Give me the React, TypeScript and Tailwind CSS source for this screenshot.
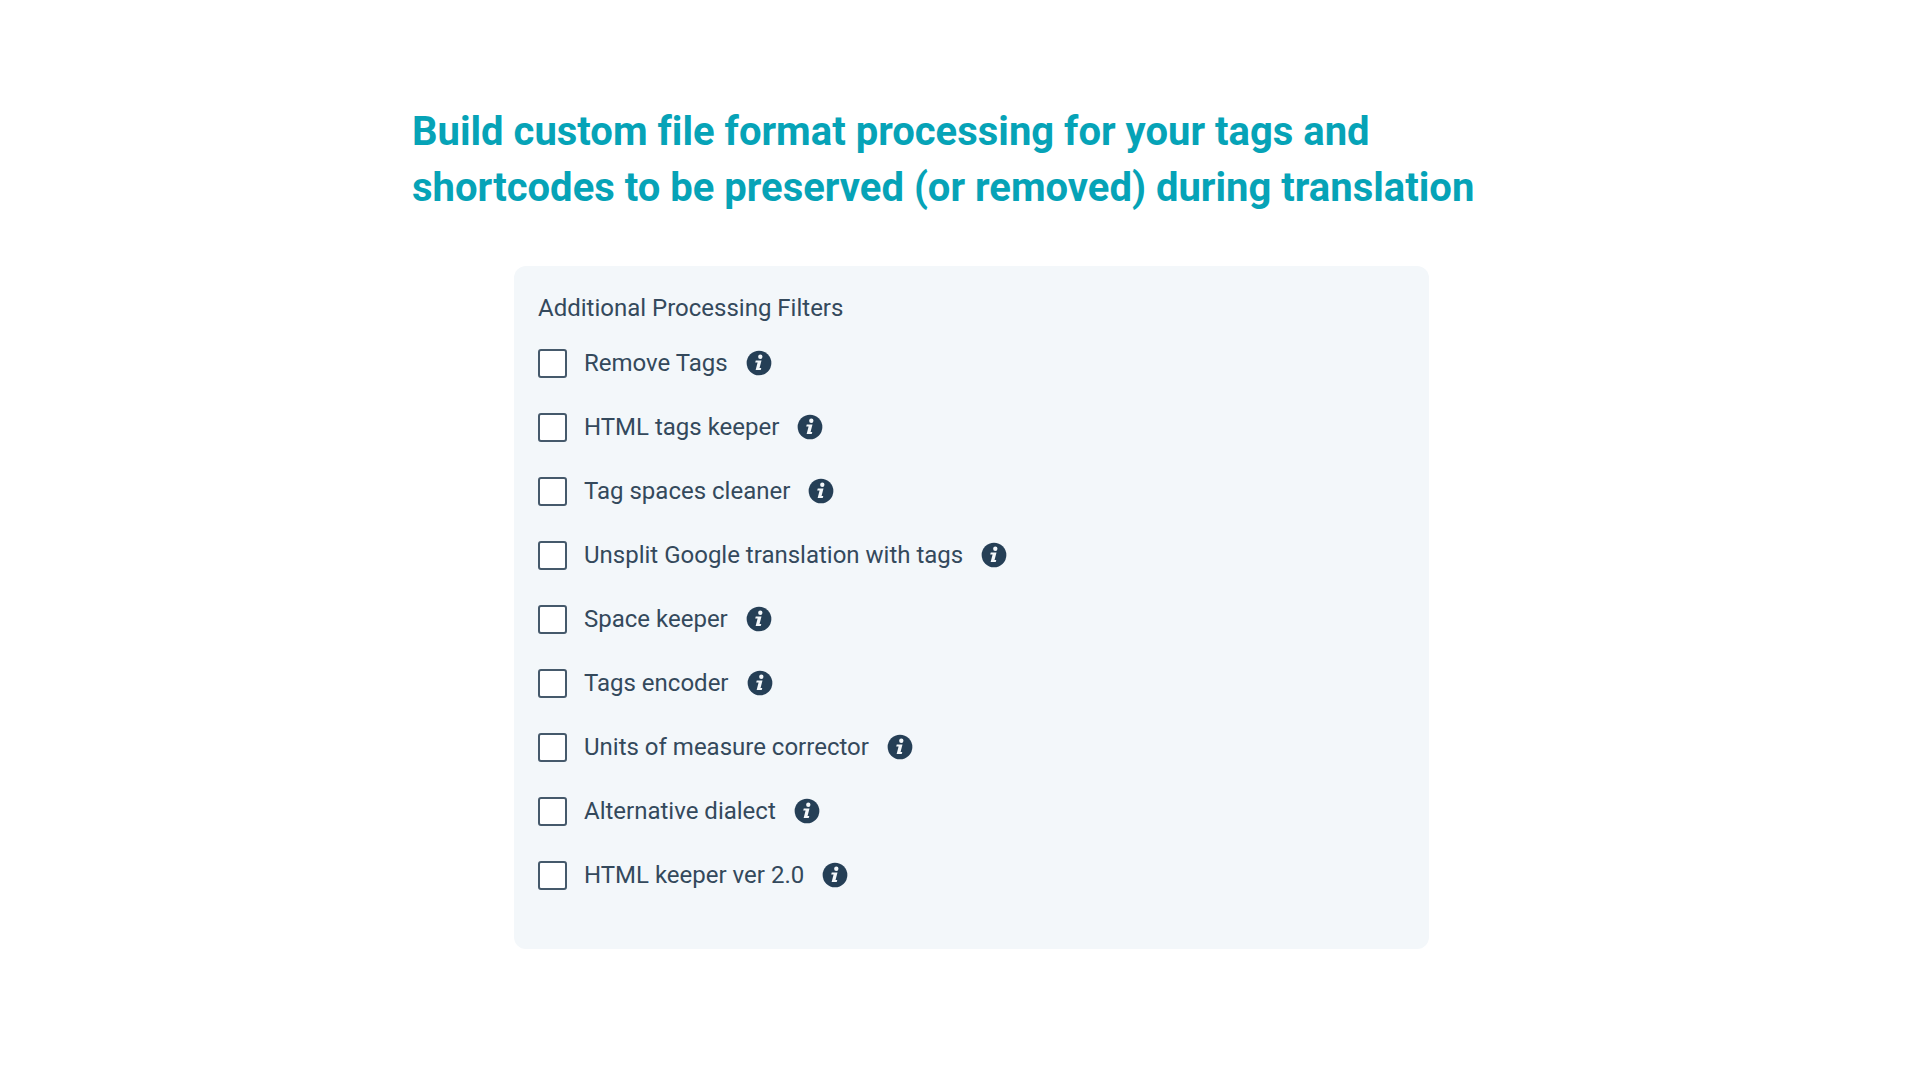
const filters = [
  'Remove Tags',
  'HTML tags keeper',
  'Tag spaces cleaner',
  'Unsplit Google translation with tags',
  'Space keeper',
  'Tags encoder',
  'Units of measure corrector',
  'Alternative dialect',
  'HTML keeper ver 2.0',
]

function InfoIcon() {
  return (
    <svg viewBox="0 0 24 24" className="size-[26px]" aria-hidden="true">
      <circle cx="12" cy="12" r="11.4" fill="#253f56" />
      <circle cx="13.2" cy="6.2" r="2" fill="#f3f7fa" />
      <path d="M9 9.6h5.3l-1.8 6.9h1.6l-.5 2H8.9l1.8-6.9H8.5z" fill="#f3f7fa" />
    </svg>
  )
}

function FilterRow({ label }: { label: string }) {
  return (
    <li className="flex items-center">
      <label className="flex items-center gap-[17px]">
        <input
          type="checkbox"
          className="size-[29px] shrink-0 appearance-none rounded-[3px] border-2 border-[#45596b] bg-white checked:bg-[#45596b]"
        />
        <span>{label}</span>
      </label>
      <button type="button" aria-label={`About ${label}`} className="ml-[18px]">
        <InfoIcon />
      </button>
    </li>
  )
}

export default function App() {
  return (
    <main className="min-h-screen bg-white px-6 pt-[104px] pb-12 font-[Roboto,sans-serif]">
      <div className="mx-auto w-full max-w-[1096px]">
        <h1 className="text-[40px] leading-[56px] font-bold text-[#06a3b7] [font-variant-ligatures:none]">
          Build custom file format processing for your tags and shortcodes to be preserved (or removed) during translation
        </h1>
        <section className="mt-[50px] rounded-xl bg-[#f3f7fa] px-6 pt-[26px] pb-[58px] text-2xl text-[#34495c] lg:mr-[79px] lg:ml-[102px]">
          <h2>Additional Processing Filters</h2>
          <ul className="mt-[23px] flex flex-col gap-8">
            {filters.map((label) => (
              <FilterRow key={label} label={label} />
            ))}
          </ul>
        </section>
      </div>
    </main>
  )
}
